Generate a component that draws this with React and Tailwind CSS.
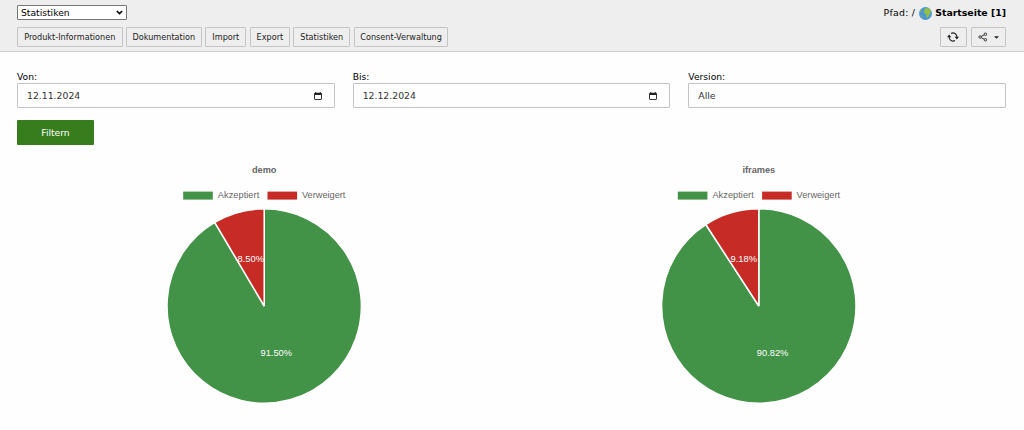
import React from 'react';

const docButtons = [
  { label: 'Produkt-Informationen', className: 'w-[105.5px]' },
  { label: 'Dokumentation', className: 'w-[75.7px]' },
  { label: 'Import', className: 'w-[41.3px]' },
  { label: 'Export', className: 'w-[39.8px]' },
  { label: 'Statistiken', className: 'w-[57px]' },
  { label: 'Consent-Verwaltung', className: 'w-[94.6px]' },
];

const charts = [
  { title: 'demo', accepted: 91.5, denied: 8.5, cx: 247.2, acceptedX: 259.3, deniedX: 233.8 },
  { title: 'iframes', accepted: 90.82, denied: 9.18, cx: 246.8, acceptedX: 260.6, deniedX: 231.8 },
];

function GlobeIcon() {
  return (
    <svg viewBox="0 0 16 16" className="w-[13px] h-[13px] mx-[3.5px]">
      <circle cx="8" cy="8" r="8" fill="#4a94d8" />
      <path
        d="M8.2 1.2 12 1.4l2.7 3-.2 3.3-1.7 1.1-1 2.8-1.9 1.8-1.2-2.2.3-2-2-1-1.3-2.2 1-2-.4-1.2z"
        fill="#8fc04a"
      />
      <path d="m1.3 4.4 2-1.5 1 1.2-1.3 1.8-1.8.8zM2 9.8l2.2.5.8 2-.9 1.5z" fill="#79b06a" />
    </svg>
  );
}

function RefreshIcon() {
  return (
    <svg viewBox="0 0 16 16" className="w-3 h-3" fill="none" stroke="#222" strokeWidth="1.5">
      <path d="M5.4 3.3A5.2 5.2 0 0 1 13.2 8" />
      <path d="M10.6 12.7A5.2 5.2 0 0 1 2.8 8" />
      <path d="M10.2 7.6H16l-2.9 3.8zM5.8 8.4H0l2.9-3.8z" fill="#222" stroke="none" />
    </svg>
  );
}

function ShareIcon() {
  return (
    <svg viewBox="0 0 16 16" className="w-[10px] h-[10px]" fill="none" stroke="#333" strokeWidth="1.6">
      <path d="m5.3 7 4.6-2.5M5.3 9l4.6 2.5" />
      <circle cx="3.5" cy="8" r="2" />
      <circle cx="11.8" cy="3.6" r="2" />
      <circle cx="11.8" cy="12.4" r="2" />
    </svg>
  );
}

function CalendarIcon() {
  return (
    <svg viewBox="0 0 16 16" className="w-2 h-2" fill="none" stroke="#222">
      <rect x="1" y="2.5" width="14" height="12.5" rx="1" strokeWidth="1.8" />
      <path d="M1 4h14" strokeWidth="4" />
      <path d="M3.5 0v3M12.5 0v3" strokeWidth="2" />
    </svg>
  );
}

function Field({ label, value, date }) {
  return (
    <label className="block pt-0.5 text-[9.2px] leading-3 text-black">
      {label}
      <div className="flex items-center justify-between h-[25px] pl-[9px] pr-3 bg-[#fefefe] border border-[#c3c3c3] rounded-[1px] text-[9.3px] text-[#333]">
        <span>{value}</span>
        {date && <CalendarIcon />}
      </div>
    </label>
  );
}

function PieChart({ chart }) {
  const cx = chart.cx;
  const cy = 146;
  const r = 97.2;
  const angle = (chart.accepted / 100) * 2 * Math.PI;
  const x = cx + r * Math.sin(angle);
  const y = cy - r * Math.cos(angle);

  return (
    <svg
      viewBox="0 0 494 250"
      className="w-[494px] h-[250px] font-['Liberation_Sans',Arial,sans-serif] text-[9.2px]"
    >
      <text x={cx} y="13.2" textAnchor="middle" fontWeight="bold" fill="#666">
        {chart.title}
      </text>

      <rect x={cx - 81} y="31.6" width="29.6" height="8" fill="#429247" />
      <text x={cx - 46.4} y="38.4" fill="#666" textLength="41.4">Akzeptiert</text>
      <rect x={cx + 3.3} y="31.6" width="29.6" height="8" fill="#c62b26" />
      <text x={cx + 37.8} y="38.4" fill="#666" textLength="43.4">Verweigert</text>

      <g stroke="#fff" strokeWidth="1.5" strokeLinejoin="bevel">
        <path d={`M${cx} ${cy}V${cy - r}A${r} ${r} 0 1 1 ${x} ${y}Z`} fill="#429247" />
        <path d={`M${cx} ${cy}L${x} ${y}A${r} ${r} 0 0 1 ${cx} ${cy - r}Z`} fill="#c62b26" />
      </g>

      <g fill="#fff" textAnchor="middle" className="text-[9.3px]">
        <text x={chart.acceptedX} y="195.5">{chart.accepted.toFixed(2)}%</text>
        <text x={chart.deniedX} y="102">{chart.denied.toFixed(2)}%</text>
      </g>
    </svg>
  );
}

function Header() {
  return (
    <header className="h-[52px] pl-[17px] pr-[18px] pt-[5px] bg-[#eee] border-b border-[#d0d0d0]">
      <div className="flex items-start justify-between h-4">
        <button className="flex items-center justify-between w-[110px] h-[15px] pl-[3px] pr-[3px] bg-white border border-[#767676] rounded-[1px] text-[9.2px] text-black">
          <span className="pt-px leading-[14px]">Statistiken</span>
          <svg viewBox="0 0 8 6" className="w-[7px] h-[5px]" fill="none" stroke="#000" strokeWidth="1.9">
            <path d="m.8 1.2 3.2 3.2 3.2-3.2" />
          </svg>
        </button>
        <div className="flex items-center text-[9.35px] leading-4 text-black">
          <span className="tracking-[0.25px]">Pfad: /</span>
          <GlobeIcon />
          <strong>Startseite [1]</strong>
        </div>
      </div>

      <div className="flex items-center justify-between mt-[6px]">
        <div className="flex gap-[3.5px]">
          {docButtons.map((button) => (
            <button
              key={button.label}
              className={`${button.className} h-5 border border-[#c4c4c4] rounded-[1px] text-[8.15px] leading-none whitespace-nowrap text-[#222]`}
            >
              {button.label}
            </button>
          ))}
        </div>
        <div className="flex gap-1">
          <button className="flex items-center justify-center w-[27px] h-5 border border-[#c4c4c4] rounded-[1px]">
            <RefreshIcon />
          </button>
          <button className="flex items-center justify-center gap-[6px] w-[35.5px] h-5 border border-[#c4c4c4] rounded-[1px]">
            <ShareIcon />
            <svg viewBox="0 0 6 3" className="w-[5px] h-[3px]">
              <path d="M0 0h6L3 3z" fill="#222" />
            </svg>
          </button>
        </div>
      </div>
    </header>
  );
}

function App() {
  return (
    <div className="w-[1024px] h-[430px] overflow-hidden bg-[#fefefe] font-['DejaVu_Sans',Verdana,sans-serif]">
      <Header />
      <main className="pl-[17px] pr-[18px] pt-[17px]">
        <div className="grid grid-cols-3 gap-[18px]">
          <Field label="Von:" value="12.11.2024" date />
          <Field label="Bis:" value="12.12.2024" date />
          <Field label="Version:" value="Alle" />
        </div>
        <button className="block mt-3 w-[77px] h-[25px] bg-[#377d1e] rounded-[1px] text-[9.2px] text-white">
          Filtern
        </button>
        <div className="grid grid-cols-2 mt-[15px]">
          {charts.map((chart) => (
            <PieChart key={chart.title} chart={chart} />
          ))}
        </div>
      </main>
    </div>
  );
}

export default App;
